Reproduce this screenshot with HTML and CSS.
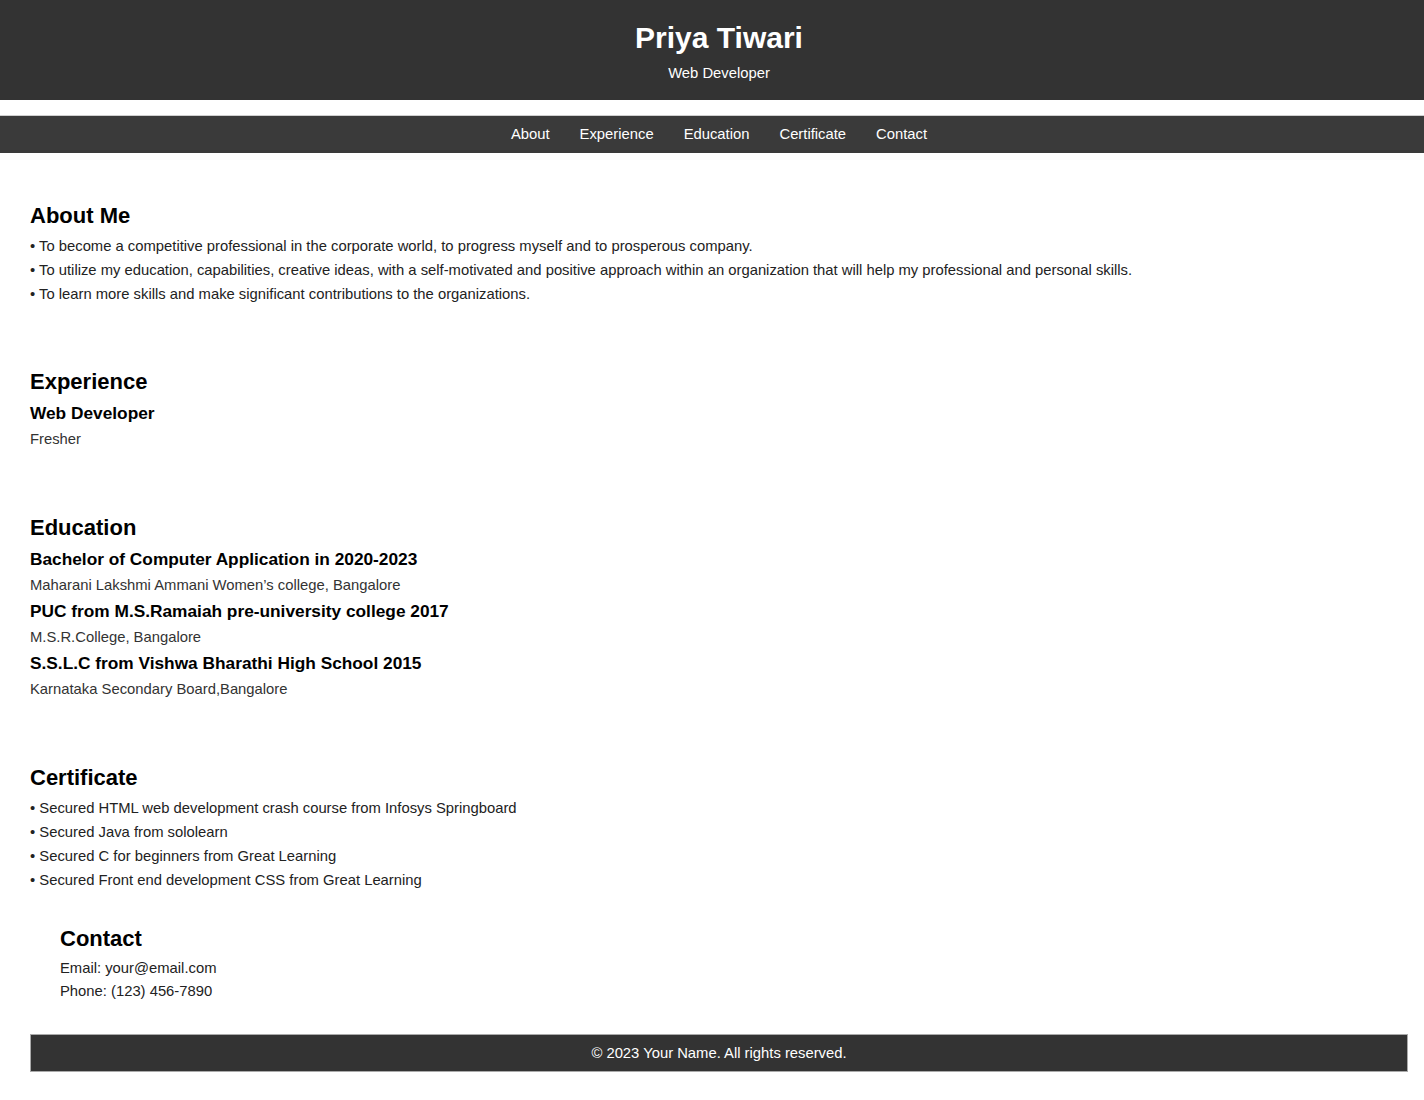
FILE: index.html
```html
<!DOCTYPE html>
<html lang="en">
<head>
<meta charset="utf-8">
<title>Priya Tiwari</title>
<link rel="stylesheet" href="styles.css">
</head>
<body>
<header class="site-header">
  <h1 class="site-title">Priya Tiwari</h1>
  <p class="site-subtitle">Web Developer</p>
</header>
<nav class="site-nav">
  <a href="#about">About</a>
  <a href="#experience">Experience</a>
  <a href="#education">Education</a>
  <a href="#certificate">Certificate</a>
  <a href="#contact">Contact</a>
</nav>
<main class="content">
  <section id="about" class="section section-about">
    <h2 class="section-title">About Me</h2>
    <ul class="bullets">
      <li>To become a competitive professional in the corporate world, to progress myself and to prosperous company.</li>
      <li>To utilize my education, capabilities, creative ideas, with a self-motivated and positive approach within an organization that will help my professional and personal skills.</li>
      <li>To learn more skills and make significant contributions to the organizations.</li>
    </ul>
  </section>
  <section id="experience" class="section">
    <h2 class="section-title">Experience</h2>
    <h3 class="item-title">Web Developer</h3>
    <p class="item-text">Fresher</p>
  </section>
  <section id="education" class="section">
    <h2 class="section-title">Education</h2>
    <h3 class="item-title">Bachelor of Computer Application in 2020-2023</h3>
    <p class="item-text">Maharani Lakshmi Ammani Women’s college, Bangalore</p>
    <h3 class="item-title">PUC from M.S.Ramaiah pre-university college 2017</h3>
    <p class="item-text">M.S.R.College, Bangalore</p>
    <h3 class="item-title">S.S.L.C from Vishwa Bharathi High School 2015</h3>
    <p class="item-text">Karnataka Secondary Board,Bangalore</p>
  </section>
  <section id="certificate" class="section section-cert">
    <h2 class="section-title">Certificate</h2>
    <ul class="bullets">
      <li>Secured HTML web development crash course from Infosys Springboard</li>
      <li>Secured Java from sololearn</li>
      <li>Secured C for beginners from Great Learning</li>
      <li>Secured Front end development CSS from Great Learning</li>
    </ul>
  </section>
  <section id="contact" class="section section-contact">
    <h2 class="section-title">Contact</h2>
    <p class="contact-line">Email: your@email.com</p>
    <p class="contact-line">Phone: (123) 456-7890</p>
  </section>
</main>
<footer class="site-footer">
  <p>© 2023 Your Name. All rights reserved.</p>
</footer>
</body>
</html>
```

FILE: styles.css
```css
* {
  box-sizing: border-box;
}

html, body {
  margin: 0;
  padding: 0;
  background: #ffffff;
}

body {
  font-family: "Liberation Sans", Arial, Helvetica, sans-serif;
  color: #222222;
  font-size: 14.8px;
}

.site-header {
  background: #333333;
  color: #ffffff;
  text-align: center;
  height: 100px;
  padding: 20px 0 0 14px;
}

.site-title {
  margin: 0;
  font-size: 30px;
  line-height: 36px;
  font-weight: bold;
}

.site-subtitle {
  margin: 7px 0 0;
  font-size: 14.8px;
  line-height: 20px;
}

.site-nav {
  margin-top: 15px;
  background: #3a3a3a;
  border-top: 1px solid #cfcfcf;
  height: 38px;
  display: flex;
  justify-content: center;
  gap: 30px;
  padding-left: 14px;
}

.site-nav a {
  color: #ffffff;
  text-decoration: none;
  font-size: 14.8px;
  line-height: 36px;
}

.content {
  padding: 0 30px;
}

.section {
  margin-top: 63px;
}

.section-about {
  margin-top: 50px;
}

.section-contact {
  margin-top: 34px;
  padding-left: 30px;
}

.section-title {
  margin: 0 0 5px;
  font-size: 22px;
  line-height: 26px;
  font-weight: bold;
  color: #000000;
}

.bullets {
  list-style: none;
  margin: 0;
  padding: 0;
}

.bullets li {
  font-size: 14.8px;
  line-height: 24px;
}

.bullets li::before {
  content: "• ";
}

.item-title {
  margin: 0;
  font-size: 17.3px;
  line-height: 26px;
  font-weight: bold;
  color: #000000;
}

.item-text {
  margin: 0;
  font-size: 14.8px;
  line-height: 26px;
  color: #333333;
}

.contact-line {
  margin: 0;
  font-size: 14.8px;
  line-height: 23px;
}

.site-footer {
  margin: 31px 16px 0 30px;
  background: #333333;
  border: 1px solid #aaaaaa;
  color: #ffffff;
  height: 38px;
  text-align: center;
}

.site-footer p {
  margin: 0;
  font-size: 14.8px;
  line-height: 36px;
}
```
